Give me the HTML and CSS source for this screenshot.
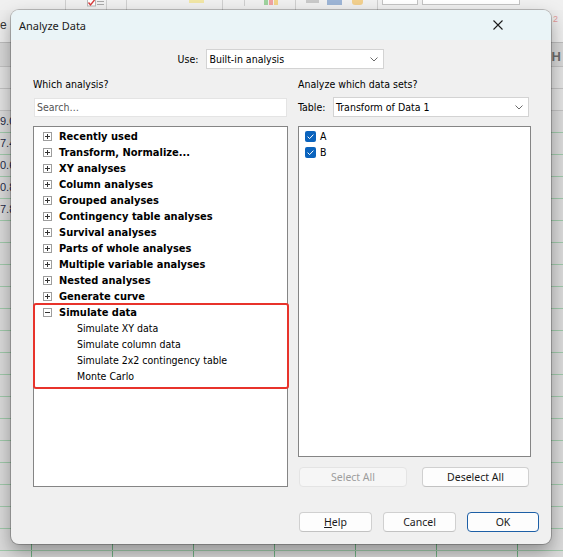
FILE: index.html
```html
<!DOCTYPE html>
<html>
<head>
<meta charset="utf-8">
<title>Analyze Data</title>
<link rel="stylesheet" href="styles.css">
</head>
<body>
<div class="app">
  <div class="toolbar">
    <span class="tb-sep tb-s1"></span>
    <span class="tb-icon-check">
      <svg width="18" height="7" viewBox="0 0 18 7"><rect x="0.5" y="-1" width="8" height="7" fill="#fff" stroke="#b9b9b9"/><path d="M1.5 2.5 L3.5 5 L7.5 0" stroke="#d83b3b" stroke-width="1.4" fill="none"/><path d="M10 1.5 H17 M10 4.5 H17" stroke="#a9a9a9" stroke-width="1"/></svg>
    </span>
    <span class="tb-sep tb-s2"></span>
    <span class="tb-sep tb-s3"></span>
    <span class="tb-yellow"></span>
    <span class="tb-sep tb-s4"></span>
    <span class="tb-sep tb-short tb-s5"></span>
    <span class="tb-bars">
      <svg width="14" height="5" viewBox="0 0 14 5"><rect x="0" y="0" width="4" height="5" fill="#9fd39f"/><rect x="5" y="0" width="4" height="5" fill="#f0a3a3"/><rect x="10" y="0" width="4" height="5" fill="#f3d48a"/></svg>
    </span>
    <span class="tb-sep tb-s6"></span>
    <span class="tb-val"></span>
    <span class="tb-blue"></span>
    <span class="tb-orange"></span>
    <span class="tb-sep tb-s7"></span>
    <span class="tb-box tb-box1"></span>
    <span class="tb-box tb-box2"></span>
  </div>
  <div class="sheet">
    <div class="tabrow">
      <span class="tab-e">e</span>
      <span class="tab-2">2</span>
    </div>
    <div class="colhdr"><span class="col-h">H</span></div>
    <div class="subrow"></div>
    <div class="subrow"></div>
    <div class="rows">
      <div class="num">9.0</div>
      <div class="num">7.4</div>
      <div class="num">0.6</div>
      <div class="num">0.8</div>
      <div class="num">7.8</div>
    </div>
  </div>

  <div class="dialog">
    <div class="titlebar">
      <span class="title">Analyze Data</span>
      <span class="close">
        <svg width="10" height="10" viewBox="0 0 10 10"><path d="M0.5 0.5 L9.5 9.5 M9.5 0.5 L0.5 9.5" stroke="#1b1b1b" stroke-width="1.1" fill="none"/></svg>
      </span>
    </div>

    <div class="use-row">
      <span class="lbl">Use:</span>
      <div class="select use-select">
        <span class="select-text">Built-in analysis</span>
        <svg class="chev" width="8" height="5" viewBox="0 0 8 5"><path d="M0.5 0.5 L4 4 L7.5 0.5" stroke="#6a6a6a" fill="none"/></svg>
      </div>
    </div>

    <div class="columns">
      <div class="col-left">
        <div class="lbl section-label">Which analysis?</div>
        <div class="search">Search…</div>
        <div class="tree">
          <div class="node"><svg class="exp" width="9" height="9" viewBox="0 0 9 9"><rect x="0.5" y="0.5" width="8" height="8" fill="#fff" stroke="#9d9d9d"/><path d="M2 4.5 H7 M4.5 2 V7" stroke="#333"/></svg><span class="node-text">Recently used</span></div>
          <div class="node"><svg class="exp" width="9" height="9" viewBox="0 0 9 9"><rect x="0.5" y="0.5" width="8" height="8" fill="#fff" stroke="#9d9d9d"/><path d="M2 4.5 H7 M4.5 2 V7" stroke="#333"/></svg><span class="node-text">Transform, Normalize...</span></div>
          <div class="node"><svg class="exp" width="9" height="9" viewBox="0 0 9 9"><rect x="0.5" y="0.5" width="8" height="8" fill="#fff" stroke="#9d9d9d"/><path d="M2 4.5 H7 M4.5 2 V7" stroke="#333"/></svg><span class="node-text">XY analyses</span></div>
          <div class="node"><svg class="exp" width="9" height="9" viewBox="0 0 9 9"><rect x="0.5" y="0.5" width="8" height="8" fill="#fff" stroke="#9d9d9d"/><path d="M2 4.5 H7 M4.5 2 V7" stroke="#333"/></svg><span class="node-text">Column analyses</span></div>
          <div class="node"><svg class="exp" width="9" height="9" viewBox="0 0 9 9"><rect x="0.5" y="0.5" width="8" height="8" fill="#fff" stroke="#9d9d9d"/><path d="M2 4.5 H7 M4.5 2 V7" stroke="#333"/></svg><span class="node-text">Grouped analyses</span></div>
          <div class="node"><svg class="exp" width="9" height="9" viewBox="0 0 9 9"><rect x="0.5" y="0.5" width="8" height="8" fill="#fff" stroke="#9d9d9d"/><path d="M2 4.5 H7 M4.5 2 V7" stroke="#333"/></svg><span class="node-text">Contingency table analyses</span></div>
          <div class="node"><svg class="exp" width="9" height="9" viewBox="0 0 9 9"><rect x="0.5" y="0.5" width="8" height="8" fill="#fff" stroke="#9d9d9d"/><path d="M2 4.5 H7 M4.5 2 V7" stroke="#333"/></svg><span class="node-text">Survival analyses</span></div>
          <div class="node"><svg class="exp" width="9" height="9" viewBox="0 0 9 9"><rect x="0.5" y="0.5" width="8" height="8" fill="#fff" stroke="#9d9d9d"/><path d="M2 4.5 H7 M4.5 2 V7" stroke="#333"/></svg><span class="node-text">Parts of whole analyses</span></div>
          <div class="node"><svg class="exp" width="9" height="9" viewBox="0 0 9 9"><rect x="0.5" y="0.5" width="8" height="8" fill="#fff" stroke="#9d9d9d"/><path d="M2 4.5 H7 M4.5 2 V7" stroke="#333"/></svg><span class="node-text">Multiple variable analyses</span></div>
          <div class="node"><svg class="exp" width="9" height="9" viewBox="0 0 9 9"><rect x="0.5" y="0.5" width="8" height="8" fill="#fff" stroke="#9d9d9d"/><path d="M2 4.5 H7 M4.5 2 V7" stroke="#333"/></svg><span class="node-text">Nested analyses</span></div>
          <div class="node"><svg class="exp" width="9" height="9" viewBox="0 0 9 9"><rect x="0.5" y="0.5" width="8" height="8" fill="#fff" stroke="#9d9d9d"/><path d="M2 4.5 H7 M4.5 2 V7" stroke="#333"/></svg><span class="node-text">Generate curve</span></div>
          <div class="node"><svg class="exp" width="9" height="9" viewBox="0 0 9 9"><rect x="0.5" y="0.5" width="8" height="8" fill="#fff" stroke="#9d9d9d"/><path d="M2 4.5 H7" stroke="#333"/></svg><span class="node-text">Simulate data</span></div>
          <div class="leaf">Simulate XY data</div>
          <div class="leaf">Simulate column data</div>
          <div class="leaf">Simulate 2x2 contingency table</div>
          <div class="leaf">Monte Carlo</div>
          <div class="highlight"></div>
        </div>
      </div>

      <div class="col-right">
        <div class="lbl section-label">Analyze which data sets?</div>
        <div class="table-row">
          <span class="lbl">Table:</span>
          <div class="select table-select">
            <span class="select-text">Transform of Data 1</span>
            <svg class="chev" width="8" height="5" viewBox="0 0 8 5"><path d="M0.5 0.5 L4 4 L7.5 0.5" stroke="#6a6a6a" fill="none"/></svg>
          </div>
        </div>
        <div class="list">
          <div class="check-item"><svg class="cb" width="11" height="11" viewBox="0 0 11 11"><rect x="0" y="0" width="11" height="11" rx="2" fill="#0a63bd"/><path d="M2.6 5.6 L4.6 7.6 L8.4 3.6" stroke="#fff" stroke-width="1" fill="none"/></svg><span>A</span></div>
          <div class="check-item"><svg class="cb" width="11" height="11" viewBox="0 0 11 11"><rect x="0" y="0" width="11" height="11" rx="2" fill="#0a63bd"/><path d="M2.6 5.6 L4.6 7.6 L8.4 3.6" stroke="#fff" stroke-width="1" fill="none"/></svg><span>B</span></div>
        </div>
        <div class="list-buttons">
          <button class="btn btn-select" disabled>Select All</button>
          <button class="btn btn-deselect">Deselect All</button>
        </div>
      </div>
    </div>

    <div class="footer">
      <button class="btn btn-foot"><u>H</u>elp</button>
      <button class="btn btn-foot">Cancel</button>
      <button class="btn btn-foot btn-default">OK</button>
    </div>
  </div>
</div>
</body>
</html>
```

FILE: styles.css
```css
* { box-sizing: border-box; }
html, body { margin: 0; padding: 0; }
body {
  width: 563px;
  height: 557px;
  overflow: hidden;
  background: #d9d9d9;
  font-family: "DejaVu Sans Condensed", "DejaVu Sans", sans-serif;
}
.app {
  position: relative;
  width: 563px;
  height: 557px;
  display: flex;
  flex-direction: column;
}

/* ---------- background application ---------- */
.toolbar {
  height: 10px;
  flex: none;
  background: #f0f0f0;
  display: flex;
  align-items: flex-start;
  overflow: hidden;
}
.tb-sep { width: 1px; height: 10px; background: #cfcfcf; flex: none; }
.tb-short { height: 6px; }
.tb-s1 { margin-left: 65px; }
.tb-icon-check { margin-left: 21px; height: 7px; display: flex; }
.tb-s2 { margin-left: 1px; }
.tb-s3 { margin-left: 19px; }
.tb-yellow { margin-left: 62px; width: 15px; height: 3px; background: #f1e6a6; }
.tb-s4 { margin-left: 18px; }
.tb-s5 { margin-left: 21px; }
.tb-bars { margin-left: 19px; display: flex; }
.tb-s6 { margin-left: 17px; }
.tb-val { margin-left: 10px; width: 13px; height: 3px; background: #c9c9c9; }
.tb-blue { margin-left: 8px; width: 15px; height: 5px; background: #9db5d6; }
.tb-orange { margin-left: 10px; width: 11px; height: 5px; background: #f2d08e; border-radius: 0 0 3px 3px; }
.tb-s7 { margin-left: 14px; }
.tb-box { height: 5px; background: #fff; border: 1px solid #c3c3c3; border-top: none; }
.tb-box1 { margin-left: 4px; width: 36px; }
.tb-box2 { margin-left: 4px; width: 98px; }

.sheet { flex: 1; display: flex; flex-direction: column; }
.tabrow {
  height: 32px;
  background: #ededed;
  display: flex;
  justify-content: space-between;
  align-items: flex-start;
  font-family: "Liberation Sans", Arial, sans-serif;
}
.tab-e { font-size: 12px; color: #333; margin-left: 0; margin-top: 8px; }
.tab-2 { font-size: 9px; color: #e59a9a; margin-right: 5px; margin-top: 4px; }
.colhdr {
  height: 24px;
  background: #d7d7d7;
  border-top: 1px solid #bdbdbd;
  display: flex;
  justify-content: flex-end;
  align-items: center;
  padding-top: 3px;
  font-family: "Liberation Sans", Arial, sans-serif;
}
.col-h { font-size: 13px; font-weight: bold; color: #6e6e6e; margin-right: 2px; }
.subrow {
  height: 22px;
  background: #e2e2e2;
  border-top: 1px solid #c2c2c2;
}
.rows {
  flex: 1;
  border-top: 1px solid #c2c2c2;
  background-color: #dadada;
  background-image:
    repeating-linear-gradient(to bottom, transparent 0, transparent 21px, #9fc9aa 21px, #9fc9aa 22px),
    repeating-linear-gradient(to right, transparent 0, transparent 31px, #6fae82 31px, #6fae82 32px, transparent 32px, transparent 81px);
  font-family: "Liberation Sans", Arial, sans-serif;
}
.num {
  height: 22px;
  line-height: 21px;
  font-size: 11px;
  color: #1f2a48;
  margin-left: 0;
}

/* ---------- dialog ---------- */
.dialog {
  position: absolute;
  left: 11px;
  top: 10px;
  width: 540px;
  height: 534px;
  background: #f0f0f0;
  border-radius: 8px;
  box-shadow: 0 0 0 1px rgba(0, 0, 0, 0.22), 0 8px 18px rgba(0, 0, 0, 0.34);
  display: flex;
  flex-direction: column;
  overflow: hidden;
}
.titlebar {
  height: 30px;
  flex: none;
  background: #eaf4f7;
  display: flex;
  align-items: center;
  justify-content: space-between;
}
.title {
  margin-left: 8px;
  font-family: "Segoe UI", "Noto Sans", sans-serif;
  font-size: 11px;
  color: #1a1a1a;
}
.close { margin-right: 48px; display: flex; margin-top: -1px; }

.lbl {
  font-size: 10.5px;
  color: #000;
  line-height: 13px;
}

.use-row {
  margin-top: 9px;
  height: 20px;
  display: flex;
  justify-content: center;
  align-items: center;
  gap: 8px;
}
.select {
  height: 20px;
  background: #fff;
  border: 1px solid #d3d3d3;
  display: flex;
  align-items: center;
  justify-content: space-between;
  padding: 0 5px 0 2px;
}
.select-text { font-size: 10.5px; color: #000; }
.chev { flex: none; }
.use-select { width: 178px; }

.columns {
  margin-top: 9px;
  padding: 0 20px 0 22px;
  display: grid;
  grid-template-columns: 255px 233px;
  column-gap: 10px;
}
.col-left, .col-right { display: flex; flex-direction: column; }

.search {
  margin: 7px 1px 0 1px;
  height: 19px;
  background: #fff;
  border: 1px solid #e4e4e4;
  font-size: 10.5px;
  line-height: 17px;
  color: #555;
  padding-left: 2px;
}
.tree {
  position: relative;
  margin-top: 9px;
  height: 361px;
  background: #fff;
  border: 1px solid #858585;
  padding-top: 1px;
}
.node {
  height: 16px;
  display: flex;
  align-items: center;
}
.exp { margin-left: 9px; flex: none; }
.node-text {
  margin-left: 7px;
  font-weight: bold;
  font-size: 11px;
  color: #000;
}
.leaf {
  height: 16px;
  line-height: 16px;
  padding-left: 43px;
  font-size: 10.5px;
  color: #000;
}
.highlight {
  position: absolute;
  top: 176px;
  left: -1px;
  width: 256px;
  height: 86px;
  border: 2px solid #e8332b;
  border-radius: 3px;
}

.table-row {
  margin-top: 6px;
  height: 20px;
  display: flex;
  align-items: center;
}
.table-select { width: 196px; margin-left: auto; margin-right: 2px; }
.list {
  margin-top: 9px;
  height: 331px;
  background: #fff;
  border: 1px solid #858585;
  padding-top: 1px;
}
.check-item {
  height: 16px;
  display: flex;
  align-items: center;
  font-size: 10.5px;
  color: #000;
}
.cb { margin-left: 6px; margin-right: 4px; flex: none; }

.btn {
  height: 20px;
  padding: 0;
  background: #fdfdfd;
  border: 1px solid #d0d0d0;
  border-bottom-color: #c2c2c2;
  border-radius: 4px;
  font-family: "Segoe UI", "Noto Sans", sans-serif;
  font-size: 10.5px;
  color: #1a1a1a;
  line-height: 18px;
}
.list-buttons {
  margin-top: 10px;
  display: flex;
  justify-content: space-between;
  padding: 0 2px 0 1px;
}
.btn-select { width: 108px; background: #f6f6f6; border-color: #e4e4e4; color: #9d9d9d; }
.btn-deselect { width: 107px; }

.footer {
  margin-top: 25px;
  padding-right: 12px;
  display: flex;
  justify-content: flex-end;
  gap: 11px;
}
.btn-foot { width: 73px; }
.btn-default { width: 72px; border: 1px solid #1d5fa6; }
```
